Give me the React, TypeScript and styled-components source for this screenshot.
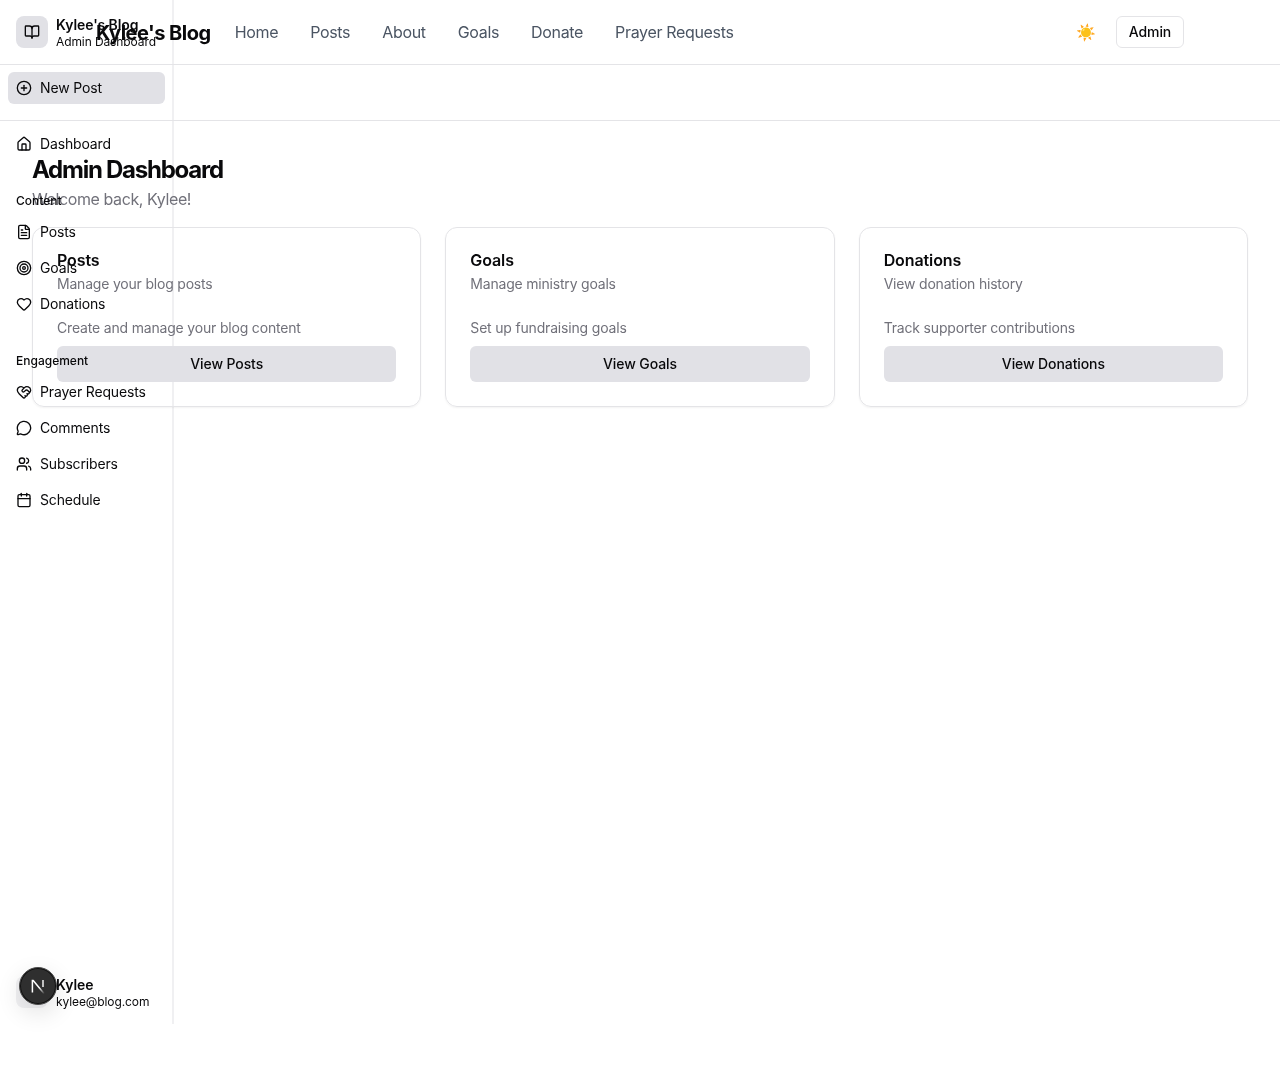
import React from "react";
import styled, { createGlobalStyle } from "styled-components";
import {
    BookOpen,
    Calendar,
    CirclePlus,
    FileText,
    Heart,
    HeartHandshake,
    House,
    MessageCircle,
    Target,
    Users,
} from "lucide-react";

const GlobalStyle = createGlobalStyle`
    * {
        box-sizing: border-box;
    }

    body {
        margin: 0;
        background-color: #ffffff;
        color: #09090b;
        font-family: Inter, "Liberation Sans", sans-serif;
    }
`;

const navLinks = ["Home", "Posts", "About", "Goals", "Donate", "Prayer Requests"];

const contentItems = [
    { label: "Posts", icon: FileText },
    { label: "Goals", icon: Target },
    { label: "Donations", icon: Heart },
];

const engagementItems = [
    { label: "Prayer Requests", icon: HeartHandshake },
    { label: "Comments", icon: MessageCircle },
    { label: "Subscribers", icon: Users },
    { label: "Schedule", icon: Calendar },
];

const cards = [
    { title: "Posts", description: "Manage your blog posts", body: "Create and manage your blog content", action: "View Posts" },
    { title: "Goals", description: "Manage ministry goals", body: "Set up fundraising goals", action: "View Goals" },
    { title: "Donations", description: "View donation history", body: "Track supporter contributions", action: "View Donations" },
];

const App = () => {
    return (
        <>
            <GlobalStyle />
            <SidebarRail />
            <Page>
                <TopBar>
                    <Brand>Kylee's Blog</Brand>
                    <TopNav>
                        {navLinks.map((link) => (
                            <TopLink key={link}>{link}</TopLink>
                        ))}
                    </TopNav>
                    <TopActions>
                        <SunToggle>☀️</SunToggle>
                        <AdminButton>Admin</AdminButton>
                    </TopActions>
                </TopBar>
                <SubBar />
                <Main>
                    <Title>Admin Dashboard</Title>
                    <Subtitle>Welcome back, Kylee!</Subtitle>
                    <CardGrid>
                        {cards.map((card) => (
                            <Card key={card.title}>
                                <CardTitle>{card.title}</CardTitle>
                                <CardDescription>{card.description}</CardDescription>
                                <CardBody>{card.body}</CardBody>
                                <CardButton>{card.action}</CardButton>
                            </Card>
                        ))}
                    </CardGrid>
                </Main>
            </Page>

            <Sidebar>
                <SidebarHeader>
                    <LogoTile>
                        <BookOpen size={16} strokeWidth={2} />
                    </LogoTile>
                    <NameBlock>
                        <StrongName>Kylee's Blog</StrongName>
                        <SmallLine>Admin Dashboard</SmallLine>
                    </NameBlock>
                </SidebarHeader>

                <NewPost>
                    <CirclePlus size={16} strokeWidth={2} />
                    <ItemText>New Post</ItemText>
                </NewPost>

                <Group>
                    <NavItem>
                        <House size={16} strokeWidth={2} />
                        <ItemText>Dashboard</ItemText>
                    </NavItem>
                </Group>

                <Group>
                    <GroupLabel>Content</GroupLabel>
                    {contentItems.map(({ label, icon: Icon }) => (
                        <NavItem key={label}>
                            <Icon size={16} strokeWidth={2} />
                            <ItemText>{label}</ItemText>
                        </NavItem>
                    ))}
                </Group>

                <Group>
                    <GroupLabel>Engagement</GroupLabel>
                    {engagementItems.map(({ label, icon: Icon }) => (
                        <NavItem key={label}>
                            <Icon size={16} strokeWidth={2} />
                            <ItemText>{label}</ItemText>
                        </NavItem>
                    ))}
                </Group>

                <SidebarFooter>
                    <AvatarTile />
                    <NameBlock>
                        <StrongName>Kylee</StrongName>
                        <SmallLine>kylee@blog.com</SmallLine>
                    </NameBlock>
                </SidebarFooter>
            </Sidebar>

            <DevBadge>
                <svg width="16" height="16" viewBox="0 0 16 16" fill="none">
                    <defs>
                        <linearGradient id="n-fade" x1="4" y1="3" x2="14" y2="15" gradientUnits="userSpaceOnUse">
                            <stop offset="0.55" stopColor="#ffffff" />
                            <stop offset="1" stopColor="#ffffff" stopOpacity="0.1" />
                        </linearGradient>
                    </defs>
                    <path d="M2.4 14.4V2.4H3.2L14 15.4" stroke="url(#n-fade)" strokeWidth="1.5" />
                    <path d="M13 2V9" stroke="#ffffff" strokeWidth="1.4" />
                </svg>
            </DevBadge>
        </>
    );
};

const SidebarRail = styled.div`
    position: fixed;
    top: 0;
    left: 172px;
    width: 2px;
    height: 1024px;
    background-color: #f0f0f2;
`;

const Page = styled.div`
    position: relative;
    min-height: 1089px;
`;

const TopBar = styled.header`
    display: flex;
    align-items: center;
    height: 65px;
    padding: 0 96px;
    border-bottom: 1px solid #e4e4e7;
`;

const Brand = styled.div`
    font-size: 20px;
    line-height: 28px;
    font-weight: 700;
    letter-spacing: -0.5px;
    margin-right: 24px;
    position: relative;
    top: 1px;
`;

const TopNav = styled.nav`
    display: flex;
    align-items: center;
    gap: 32px;
`;

const TopLink = styled.a`
    font-size: 16px;
    line-height: 24px;
    letter-spacing: -0.33px;
    color: #4b5563;
`;

const TopActions = styled.div`
    display: flex;
    align-items: center;
    gap: 20px;
    margin-left: auto;
`;

const SunToggle = styled.span`
    font-size: 16px;
    line-height: 28px;
    width: 20px;
    text-align: center;
`;

const AdminButton = styled.button`
    height: 32px;
    width: 68px;
    padding: 0 0 1px;
    border: 1px solid #e4e4e7;
    border-radius: 6px;
    background-color: #ffffff;
    color: #09090b;
    font-family: inherit;
    font-size: 14px;
    font-weight: 500;
    letter-spacing: -0.1px;
`;

const SubBar = styled.div`
    height: 56px;
    border-bottom: 1px solid #e4e4e7;
`;

const Main = styled.main`
    padding: 32px 32px 0;
`;

const Title = styled.h1`
    margin: 0;
    font-size: 24px;
    line-height: 34px;
    font-weight: 700;
    letter-spacing: -1.25px;
`;

const Subtitle = styled.p`
    margin: 0;
    font-size: 16px;
    line-height: 24px;
    letter-spacing: -0.4px;
    color: #71717a;
`;

const CardGrid = styled.div`
    display: grid;
    grid-template-columns: repeat(3, 1fr);
    gap: 24px;
    margin-top: 16px;
`;

const Card = styled.section`
    display: flex;
    flex-direction: column;
    height: 180px;
    padding: 24px;
    border: 1px solid #e4e4e7;
    border-radius: 12px;
    box-shadow: 0 1px 2px rgba(0, 0, 0, 0.05);
`;

const CardTitle = styled.h3`
    margin: 0;
    font-size: 16px;
    line-height: 16px;
    font-weight: 600;
    letter-spacing: -0.1px;
`;

const CardDescription = styled.p`
    margin: 8px 0 0;
    font-size: 14px;
    line-height: 16px;
    letter-spacing: -0.2px;
    color: #71717a;
`;

const CardBody = styled.p`
    margin: 26px 0 0;
    font-size: 14px;
    line-height: 20px;
    letter-spacing: -0.18px;
    color: #71717a;
`;

const CardButton = styled.button`
    height: 36px;
    margin-top: 8px;
    padding: 0 0 1px;
    border: none;
    border-radius: 6px;
    background-color: #e1e1e6;
    color: #09090b;
    font-family: inherit;
    font-size: 14px;
    font-weight: 500;
    letter-spacing: -0.1px;
`;

const Sidebar = styled.aside`
    position: fixed;
    top: 0;
    left: 0;
    display: flex;
    flex-direction: column;
    width: 172px;
    height: 1024px;
    color: #09090b;
`;

const SidebarHeader = styled.div`
    display: flex;
    align-items: center;
    gap: 8px;
    height: 64px;
    padding: 16px;
`;

const LogoTile = styled.div`
    display: flex;
    align-items: center;
    justify-content: center;
    flex-shrink: 0;
    width: 32px;
    height: 32px;
    border-radius: 8px;
    background-color: #e1e1e6;
`;

const NameBlock = styled.div`
    display: flex;
    flex-direction: column;
    white-space: nowrap;
`;

const StrongName = styled.span`
    font-size: 14px;
    line-height: 17px;
    font-weight: 600;
    letter-spacing: -0.08px;
`;

const SmallLine = styled.span`
    font-size: 12px;
    line-height: 16px;
    letter-spacing: -0.1px;
    padding-top: 1px;
    margin-bottom: -1px;
`;

const NewPost = styled.div`
    display: flex;
    align-items: center;
    gap: 8px;
    height: 32px;
    margin: 8px 7.5px 0 8px;
    padding: 0 8px;
    border-radius: 6px;
    background-color: #e1e1e6;
    font-size: 14px;
`;

const Group = styled.div`
    display: flex;
    flex-direction: column;
    gap: 4px;
    padding: 0 8px;
    margin-top: 24px;
`;

const GroupLabel = styled.div`
    display: flex;
    align-items: center;
    height: 32px;
    padding: 0 8px;
    margin-bottom: -4px;
    font-size: 12px;
    font-weight: 500;
`;

const NavItem = styled.div`
    display: flex;
    align-items: center;
    gap: 8px;
    height: 32px;
    padding: 0 8px;
    font-size: 14px;
    white-space: nowrap;
`;

const ItemText = styled.span`
    padding-bottom: 2px;
    letter-spacing: -0.15px;
`;

const SidebarFooter = styled.div`
    display: flex;
    align-items: center;
    gap: 8px;
    margin-top: auto;
    padding: 16px;
    height: 64px;
`;

const AvatarTile = styled.div`
    flex-shrink: 0;
    width: 32px;
    height: 32px;
    border-radius: 8px;
    background-color: #f1f1f3;
`;

const DevBadge = styled.div`
    position: fixed;
    left: 19px;
    top: 967px;
    display: flex;
    align-items: center;
    justify-content: center;
    width: 38px;
    height: 38px;
    border: 1px solid #4a4a4a;
    border-radius: 50%;
    background-color: #2f2f2f;
    box-shadow: 0 8px 24px rgba(0, 0, 0, 0.12), 0 0 0 1px #111111 inset;
`;

export default App;
